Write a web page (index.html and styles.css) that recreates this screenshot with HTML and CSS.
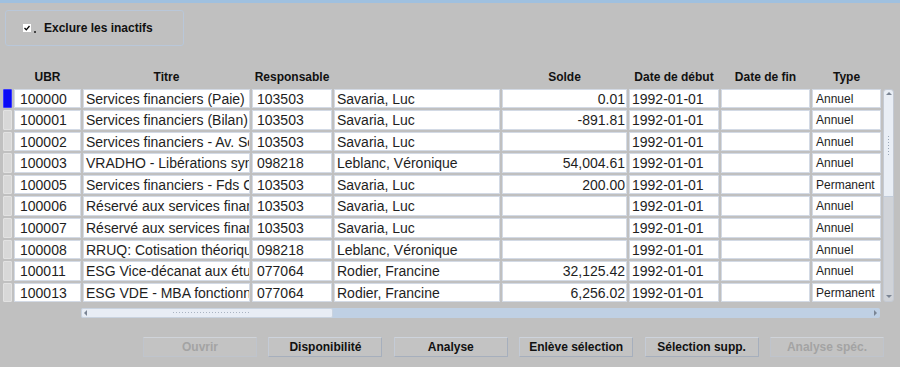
FILE: index.html
```html
<!DOCTYPE html>
<html lang="fr">
<head>
    <meta charset="UTF-8">
    <title>UBR</title>
    <link rel="stylesheet" href="styles.css">
</head>
<body>
    <div class="topbar"></div>

    <div class="filter-box">
        <span class="check">
            <svg width="8" height="8" viewBox="0 0 8 8"><rect x="0" y="0" width="8" height="8" fill="#fff"/><path d="M1.5 4 L3.3 5.8 L6.5 2" stroke="#000" stroke-width="1.3" fill="none"/></svg>
        </span>
        <span class="focus-dot"></span>
        <label>Exclure les inactifs</label>
    </div>

    <div class="grid">
        <!-- headers -->
        <div class="head"></div>
        <div class="head">UBR</div>
        <div class="head">Titre</div>
        <div class="head">Responsable</div>
        <div class="head"></div>
        <div class="head">Solde</div>
        <div class="head">Date de début</div>
        <div class="head">Date de fin</div>
        <div class="head">Type</div>
        <div class="head"></div>

        <div class="vscroll">
            <div class="vthumb">
                <span class="arrow up"></span>
                <span class="grip"></span>
            </div>
            <div class="vtrack"></div>
            <span class="arrow down"></span>
        </div>

        <div class="ind current"></div><div class="cell">100000</div><div class="cell titre">Services financiers (Paie)</div><div class="cell code">103503</div><div class="cell nom">Savaria, Luc</div><div class="cell num">0.01</div><div class="cell date">1992-01-01</div><div class="cell"></div><div class="cell type">Annuel</div>
        <div class="ind"></div><div class="cell">100001</div><div class="cell titre">Services financiers (Bilan)</div><div class="cell code">103503</div><div class="cell nom">Savaria, Luc</div><div class="cell num">-891.81</div><div class="cell date">1992-01-01</div><div class="cell"></div><div class="cell type">Annuel</div>
        <div class="ind"></div><div class="cell">100002</div><div class="cell titre">Services financiers - Av. Sociaux</div><div class="cell code">103503</div><div class="cell nom">Savaria, Luc</div><div class="cell num"></div><div class="cell date">1992-01-01</div><div class="cell"></div><div class="cell type">Annuel</div>
        <div class="ind"></div><div class="cell">100003</div><div class="cell titre">VRADHO - Libérations syndicales</div><div class="cell code">098218</div><div class="cell nom">Leblanc, Véronique</div><div class="cell num">54,004.61</div><div class="cell date">1992-01-01</div><div class="cell"></div><div class="cell type">Annuel</div>
        <div class="ind"></div><div class="cell">100005</div><div class="cell titre">Services financiers - Fds Commun</div><div class="cell code">103503</div><div class="cell nom">Savaria, Luc</div><div class="cell num">200.00</div><div class="cell date">1992-01-01</div><div class="cell"></div><div class="cell type">Permanent</div>
        <div class="ind"></div><div class="cell">100006</div><div class="cell titre">Réservé aux services financiers</div><div class="cell code">103503</div><div class="cell nom">Savaria, Luc</div><div class="cell num"></div><div class="cell date">1992-01-01</div><div class="cell"></div><div class="cell type">Annuel</div>
        <div class="ind"></div><div class="cell">100007</div><div class="cell titre">Réservé aux services financiers</div><div class="cell code">103503</div><div class="cell nom">Savaria, Luc</div><div class="cell num"></div><div class="cell date">1992-01-01</div><div class="cell"></div><div class="cell type">Annuel</div>
        <div class="ind"></div><div class="cell">100008</div><div class="cell titre">RRUQ: Cotisation théorique</div><div class="cell code">098218</div><div class="cell nom">Leblanc, Véronique</div><div class="cell num"></div><div class="cell date">1992-01-01</div><div class="cell"></div><div class="cell type">Annuel</div>
        <div class="ind"></div><div class="cell">100011</div><div class="cell titre">ESG Vice-décanat aux études</div><div class="cell code">077064</div><div class="cell nom">Rodier, Francine</div><div class="cell num">32,125.42</div><div class="cell date">1992-01-01</div><div class="cell"></div><div class="cell type">Annuel</div>
        <div class="ind"></div><div class="cell">100013</div><div class="cell titre">ESG VDE - MBA fonctionnel</div><div class="cell code">077064</div><div class="cell nom">Rodier, Francine</div><div class="cell num">6,256.02</div><div class="cell date">1992-01-01</div><div class="cell"></div><div class="cell type">Permanent</div>
    </div>

    <div class="hscroll">
        <div class="hthumb">
            <span class="arrow left"></span>
            <span class="hgrip"></span>
        </div>
        <div class="htrack"><span class="arrow right"></span></div>
    </div>

    <div class="buttons">
        <button class="btn" disabled>Ouvrir</button>
        <button class="btn">Disponibilité</button>
        <button class="btn">Analyse</button>
        <button class="btn">Enlève sélection</button>
        <button class="btn">Sélection supp.</button>
        <button class="btn" disabled>Analyse spéc.</button>
    </div>
</body>
</html>
```

FILE: styles.css
```css
body {
    margin: 0;
    background-color: #c0c0c0;
    font-family: "Liberation Sans", Arial, sans-serif;
    color: #1e1e1e;
    width: 900px;
    height: 367px;
    overflow: hidden;
}
.topbar {
    height: 3px;
    background-color: #9fc0df;
}
/* Filter group */
.filter-box {
    margin: 7px 0 0 5px;
    width: 160px;
    height: 34px;
    border: 1px solid #b9c7d9;
    border-radius: 3px;
    display: flex;
    align-items: center;
    padding-left: 17px;
    box-sizing: content-box;
}
.check {
    display: flex;
    width: 8px;
    height: 8px;
    margin-top: -1px;
}
.focus-dot {
    width: 2px;
    height: 2px;
    background-color: #444;
    margin: 8px 0 0 3px;
}
.filter-box label {
    font-size: 12px;
    font-weight: bold;
    margin-left: 8px;
    color: #111;
}
/* Table */
.grid {
    display: grid;
    grid-template-columns: 9px 67px 167px 80px 166px 125px 90px 89px 69px 11px;
    grid-template-rows: 16.5px;
    grid-auto-rows: 19.6px;
    column-gap: 2px;
    row-gap: 2px;
    margin: 24px 0 0 3px;
}
.head {
    font-size: 12px;
    font-weight: bold;
    line-height: 14px;
    text-align: center;
    white-space: nowrap;
    color: #111;
}
.cell {
    background-color: #fff;
    border: 1px solid #d3dae5;
    font-size: 14px;
    line-height: 18px;
    padding: 0 0 0 5px;
    white-space: nowrap;
    overflow: hidden;
}
.cell.titre,
.cell.nom {
    padding-left: 2px;
}
.cell.code {
    padding-left: 4px;
}
.cell.num {
    text-align: right;
    padding: 0 1px 0 0;
}
.cell.date {
    padding-left: 2px;
}
.cell.type {
    font-size: 12px;
    padding-left: 3px;
}
.ind {
    grid-column: 1;
    background-color: #d8d8d8;
    border: 1px solid #e2e2e2;
    border-radius: 1px;
}
.ind.current {
    background-color: #0a0af5;
    border-color: #3a3aff;
}
/* Vertical scrollbar */
.vscroll {
    grid-column: 10;
    grid-row: 2 / span 10;
    display: flex;
    flex-direction: column;
    background-color: #d0d3d8;
    border: 1px solid #c4cad4;
    border-radius: 3px;
    position: relative;
}
.vthumb {
    height: 106px;
    background-color: #e9eef5;
    border-bottom: 1px solid #c3cddb;
    border-radius: 3px 3px 0 0;
    display: flex;
    flex-direction: column;
    align-items: center;
}
.vtrack {
    flex: 1;
}
.grip {
    margin-top: 40px;
    width: 4px;
    height: 22px;
    background-image: radial-gradient(#9aa6b6 0.6px, transparent 0.9px);
    background-size: 3px 3px;
}
.arrow {
    width: 0;
    height: 0;
    border: 3px solid transparent;
}
.arrow.up {
    margin-top: 2px;
    border-bottom: 3px solid #7b8594;
    border-top-width: 0;
}
.arrow.down {
    position: absolute;
    bottom: 3px;
    left: 2px;
    border-top: 3px solid #7b8594;
    border-bottom-width: 0;
}
/* Horizontal scrollbar */
.hscroll {
    display: flex;
    margin: 6px 0 0 81px;
    width: 799px;
    height: 10px;
    background-color: #bfd0e4;
    border-radius: 2px;
}
.hthumb {
    width: 252px;
    background-color: #e8edf5;
    border: 1px solid #c9d3e0;
    border-radius: 2px;
    display: flex;
    align-items: center;
    box-sizing: border-box;
}
.hgrip {
    margin-left: 85px;
    width: 78px;
    height: 4px;
    background-image: radial-gradient(#aab4c2 0.6px, transparent 0.9px);
    background-size: 3px 3px;
}
.htrack {
    flex: 1;
    display: flex;
    justify-content: flex-end;
    align-items: center;
}
.arrow.left {
    margin-left: 2px;
    border-right: 3px solid #7b8594;
    border-left-width: 0;
}
.arrow.right {
    margin-right: 3px;
    border-left: 3px solid #7b8594;
    border-right-width: 0;
}
/* Buttons */
.buttons {
    display: flex;
    gap: 11.4px;
    margin: 19px 0 0 143px;
}
.btn {
    width: 114px;
    height: 20px;
    padding: 0;
    font-family: "Liberation Sans", Arial, sans-serif;
    font-size: 12px;
    font-weight: bold;
    color: #111;
    background-color: #c3c3c3;
    border: 1px solid #a6afbd;
    border-top-color: #cdd3dc;
    border-left-color: #c4cbd6;
    border-radius: 1px;
}
.btn:disabled {
    color: #a3a3a3;
    border-color: #bfc4cc;
    border-top-color: #cfd3d9;
}
```
